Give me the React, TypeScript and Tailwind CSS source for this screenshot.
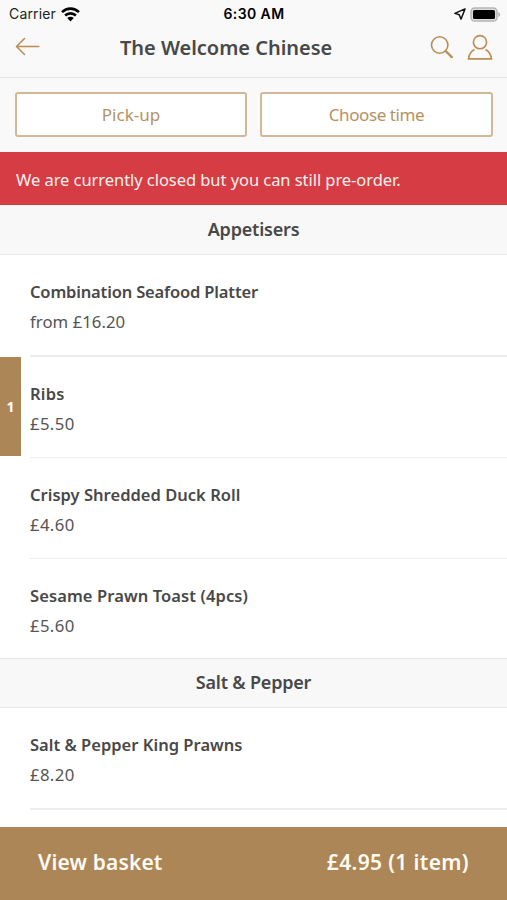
import type { ReactNode } from "react";
import { clsx } from "clsx";

type MenuItem = {
  name: string;
  price: string;
  quantity?: number;
  rowClass: string;
  nameClass: string;
  priceClass: string;
};

type MenuSection = {
  title: string;
  headerClass: string;
  items: MenuItem[];
};

const sections: MenuSection[] = [
  {
    title: "Appetisers",
    headerClass: "border-b",
    items: [
      { name: "Combination Seafood Platter", price: "from £16.20", rowClass: "h-[102px] border-b-2", nameClass: "tracking-[-0.16px]", priceClass: "tracking-[0.03px]" },
      { name: "Ribs", price: "£5.50", quantity: 1, rowClass: "h-[101px] border-b", nameClass: "tracking-[0.2px]", priceClass: "tracking-[0.35px]" },
      { name: "Crispy Shredded Duck Roll", price: "£4.60", rowClass: "h-[101px] border-b", nameClass: "tracking-[0.02px]", priceClass: "tracking-[0.35px]" },
      { name: "Sesame Prawn Toast (4pcs)", price: "£5.60", rowClass: "h-[99px]", nameClass: "tracking-[0.1px]", priceClass: "tracking-[0.35px]" },
    ],
  },
  {
    title: "Salt & Pepper",
    headerClass: "border-y pb-[2px]",
    items: [
      { name: "Salt & Pepper King Prawns", price: "£8.20", rowClass: "h-[102px] border-b-2", nameClass: "tracking-[0.02px]", priceClass: "tracking-[0.35px]" },
    ],
  },
];

function WifiIcon() {
  return (
    <svg className="h-[15px] w-[19px]" viewBox="0 0 18 14" fill="none" stroke="#000" strokeWidth="2.5">
      <path d="M1 4.7a11.4 11.4 0 0 1 16 0" />
      <path d="M3.9 8a7.3 7.3 0 0 1 10.2 0" />
      <path d="M9 13.6 5.9 10.4a4.4 4.4 0 0 1 6.2 0Z" fill="#000" stroke="none" />
    </svg>
  );
}

function StatusBar() {
  return (
    <div className="grid h-7 grid-cols-3 items-center pl-[9px] pr-[6px] font-[Inter,sans-serif] text-sm text-black">
      <div className="flex items-center gap-[5px]">
        <span className="tracking-[0.15px] text-[#222]">Carrier</span>
        <WifiIcon />
      </div>
      <span className="pr-[2px] text-center font-semibold tracking-[0.4px]">6:30 AM</span>
      <div className="flex items-center justify-end gap-1">
        <svg className="h-3 w-3" viewBox="0 0 12 12" fill="none" stroke="#111" strokeWidth="1.5" strokeLinejoin="round">
          <path d="M11 .9.900 5.400l4.300 1.300 1.900 4.400Z" />
        </svg>
        <svg className="h-[15px] w-[31px]" viewBox="0 0 31 15">
          <rect x="1" y="1" width="26" height="13" rx="3.6" fill="#dedede" stroke="#b5b5b5" strokeWidth="1.5" />
          <rect x="3" y="3" width="22" height="9" rx="1.6" fill="#000" />
          <path d="M28.3 5v5c1.2-.4 1.9-1.3 1.9-2.5S29.5 5.4 28.3 5Z" fill="#b5b5b5" />
        </svg>
      </div>
    </div>
  );
}

function NavBar() {
  return (
    <div className="flex h-[49px] items-start pl-[15px] pr-[14px]">
      <button className="mt-[9px] flex w-[105px]" aria-label="Back">
        <svg className="h-5 w-[25px]" viewBox="0 0 25 20" fill="none" stroke="#b98d55" strokeWidth="1.6" strokeLinecap="round" strokeLinejoin="round">
          <path d="M9.5 1.5 1.5 9.5l8 8M1.5 9.5h22.2" />
        </svg>
      </button>
      <h1 className="mt-[5px] whitespace-nowrap text-[20px] leading-[30px] font-semibold tracking-[-0.03px]">
        The Welcome Chinese
      </h1>
      <div className="mt-[5px] ml-auto flex items-center gap-[13px] text-[#b98d55]">
        <svg className="h-7 w-6" viewBox="0 0 24 28" fill="none" stroke="currentColor" strokeWidth="1.6">
          <circle cx="9.7" cy="12" r="8.2" />
          <path d="m15.6 18 6.2 6.1" strokeWidth="2.3" strokeLinecap="round" />
        </svg>
        <svg className="h-7 w-[26px]" viewBox="0 0 26 28" fill="none" stroke="currentColor" strokeWidth="1.6">
          <circle cx="13" cy="9.2" r="6.6" />
          <path d="M7.500 16.500C4 18.500 2 21.500 1.500 25.900h23c-.5-4.400-2.500-7.400-6-9.400" />
        </svg>
      </div>
    </div>
  );
}

function OutlineButton({ className, children }: { className: string; children: ReactNode }) {
  return (
    <button
      className={clsx(
        "h-[45px] rounded-[3px] border-2 border-[#d2b896] bg-white text-[17px] text-[#b5925f]",
        className,
      )}
    >
      {children}
    </button>
  );
}

function MenuRow({ item }: { item: MenuItem }) {
  return (
    <li className="flex">
      <div className="w-[30px] shrink-0">
        {item.quantity && (
          <div className="flex h-[99px] w-[21px] items-center justify-center bg-[#ac8657] text-sm font-bold text-white">
            {item.quantity}
          </div>
        )}
      </div>
      <div className={clsx("flex-1 border-[#ededed] pt-[22px]", item.rowClass)}>
        <h3 className={clsx("text-[16.5px] leading-[30px] font-semibold", item.nameClass)}>{item.name}</h3>
        <p className={clsx("text-[16.75px] leading-[30px] text-[#555]", item.priceClass)}>{item.price}</p>
      </div>
    </li>
  );
}

export default function App() {
  return (
    <div className="flex h-[900px] w-[507px] flex-col overflow-hidden bg-white font-['Noto_Sans',sans-serif] text-[#484848]">
      <header className="bg-[#f9f9f9]">
        <StatusBar />
        <NavBar />
      </header>
      <div className="flex h-[75px] gap-[13px] border-t border-[#e5e5e5] bg-[#f9f9f9] pl-[15px] pr-[14px] pt-[14px]">
        <OutlineButton className="w-[232px]">Pick-up</OutlineButton>
        <OutlineButton className="flex-1 tracking-[-0.4px]">Choose time</OutlineButton>
      </div>
      <div className="flex h-[53px] items-center bg-[#d63c43] px-4 pt-[3px] text-[16.5px] tracking-[-0.055px] text-[#fff0ee]">
        We are currently closed but you can still pre-order.
      </div>
      <main className="min-h-0 flex-1 overflow-hidden">
        {sections.map((section) => (
          <section key={section.title}>
            <h2
              className={clsx(
                "flex h-[50px] items-center justify-center border-[#e8e8e8] bg-[#f8f8f8] text-[18px] font-semibold tracking-[-0.2px]",
                section.headerClass,
              )}
            >
              {section.title}
            </h2>
            <ul>
              {section.items.map((item) => (
                <MenuRow key={item.name} item={item} />
              ))}
            </ul>
          </section>
        ))}
      </main>
      <footer className="flex h-[73px] items-center justify-between bg-[#ac8657] px-[38px] pb-[2px] text-[21px] font-semibold text-[#fffaf2]">
        <span className="tracking-[0.15px]">View basket</span>
        <span className="tracking-[0.35px]">£4.95 (1 item)</span>
      </footer>
    </div>
  );
}
